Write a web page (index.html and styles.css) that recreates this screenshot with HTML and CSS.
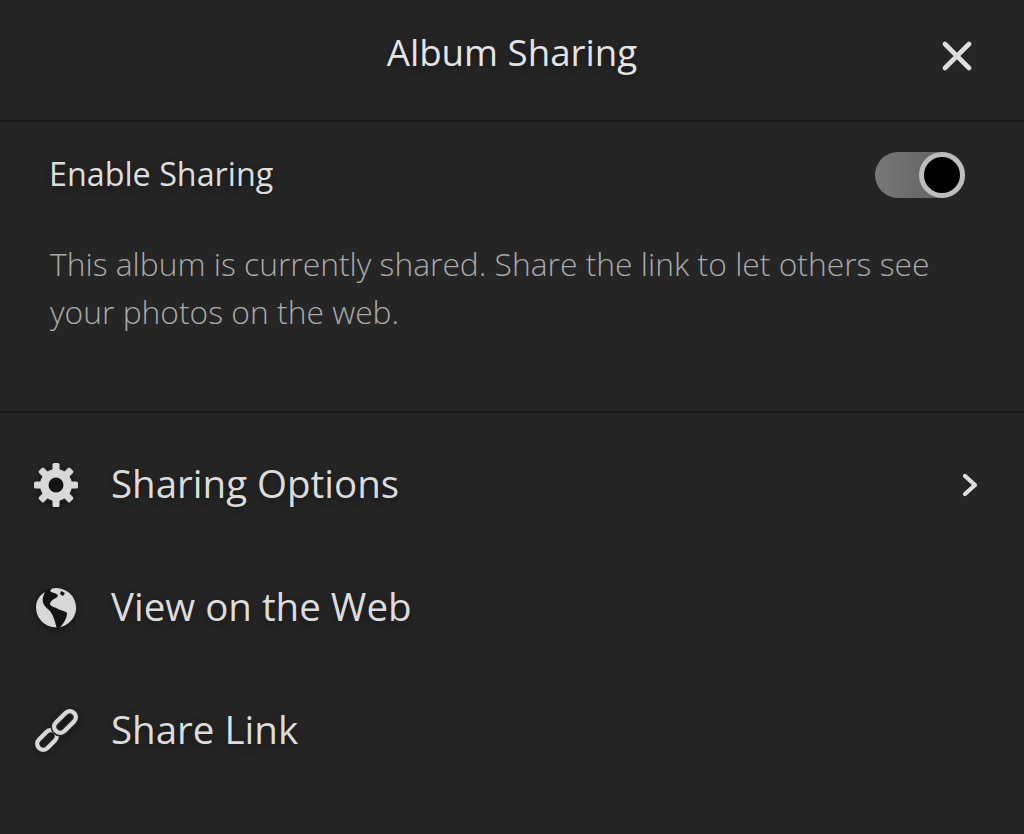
FILE: index.html
```html
<!DOCTYPE html>
<html lang="en">
<head>
    <meta charset="UTF-8">
    <meta name="viewport" content="width=device-width, initial-scale=1.0">
    <title>Album Sharing</title>
    <link rel="stylesheet" href="styles.css">
</head>
<body>
    <div class="panel">
        <header class="top-bar">
            <h1 class="title">Album Sharing</h1>
            <svg class="close-icon" viewBox="0 0 30 30">
                <path d="M3 3L27 27M27 3L3 27" fill="none" stroke="#dedede" stroke-width="4.6" stroke-linecap="round"/>
            </svg>
        </header>

        <section class="share-section">
            <div class="enable-row">
                <span class="enable-label">Enable Sharing</span>
                <div class="toggle"><div class="knob"></div></div>
            </div>
            <p class="note">This album is currently shared. Share the link to let others see your photos on the web.</p>
        </section>

        <ul class="menu">
            <li class="menu-item">
                <svg class="menu-icon" viewBox="0 0 44 44">
                    <g fill="#d8d8d8">
                        <rect x="18.5" y="0" width="7" height="44" rx="1.5"/>
                        <rect x="18.5" y="0" width="7" height="44" rx="1.5" transform="rotate(45 22 22)"/>
                        <rect x="18.5" y="0" width="7" height="44" rx="1.5" transform="rotate(90 22 22)"/>
                        <rect x="18.5" y="0" width="7" height="44" rx="1.5" transform="rotate(135 22 22)"/>
                        <circle cx="22" cy="22" r="16"/>
                    </g>
                    <circle cx="22" cy="22" r="7.5" fill="#141414"/>
                </svg>
                <span class="menu-text">Sharing Options</span>
                <svg class="chevron" viewBox="0 0 16 24">
                    <path d="M3 3L13 12L3 21" fill="none" stroke="#dedede" stroke-width="4.2" stroke-linecap="round" stroke-linejoin="round"/>
                </svg>
            </li>
            <li class="menu-item">
                <svg class="menu-icon" viewBox="0 0 44 44">
                    <circle cx="22" cy="22" r="20" fill="#141414"/>
                    <path d="M11 6C5 9.5 2 15 2 21.5C2 32 10 41 22.5 41.5C21 35 19 29 16 25C14 23 11 21 9.5 18C8 15 8.5 11 11 6Z" fill="#d8d8d8"/>
                    <path d="M18 2.4A20 20 0 0 1 42 24C41 32 35 39 26 41.3C30 37 33 32 33 27C30 24 27 25 24 23C21 21 17 21 16 18C16 16 18 14 20 13C22 12 24 11 24 9C22 7 18 7 16 5Z" fill="#d8d8d8"/>
                    <path d="M27 5L31 7L29 10L26 8Z" fill="#141414"/>
                </svg>
                <span class="menu-text">View on the Web</span>
            </li>
            <li class="menu-item">
                <svg class="menu-icon" viewBox="0 0 44 44">
                    <g fill="none" stroke-width="4.4">
                        <rect x="1.7" y="25" width="22.6" height="12" rx="6" stroke="#d8d8d8" transform="rotate(-45 13 31)"/>
                        <rect x="18.2" y="7" width="25.6" height="12" rx="6" stroke="#252525" stroke-width="7.5" transform="rotate(-45 31 13)"/>
                        <rect x="18.2" y="7" width="25.6" height="12" rx="6" stroke="#d8d8d8" transform="rotate(-45 31 13)"/>
                    </g>
                </svg>
                <span class="menu-text">Share Link</span>
            </li>
        </ul>
    </div>
</body>
</html>
```

FILE: styles.css
```css
* {
    box-sizing: border-box;
}

body {
    margin: 0;
    background-color: #252525;
    font-family: "Open Sans", "Noto Sans", sans-serif;
}

.panel {
    height: 834px;
    overflow: hidden;
}

.top-bar {
    position: relative;
    height: 122px;
    border-bottom: 2px solid #171717;
    display: flex;
    align-items: center;
    justify-content: center;
    padding-bottom: 16px;
}

.title {
    margin: 0;
    font-size: 36.7px;
    font-weight: 400;
    color: #e4e4e4;
    text-shadow: 0 2px 8px rgba(0,0,0,0.5);
}

.close-icon {
    position: absolute;
    right: 52px;
    top: 41px;
    width: 30px;
    height: 30px;
}

.share-section {
    height: 291px;
    padding: 30px 59px 0 50px;
    border-bottom: 2px solid #171717;
}

.enable-row {
    display: flex;
    align-items: center;
    justify-content: space-between;
    height: 46px;
}

.enable-label {
    margin: 0 0 4px -1px;
    font-size: 32.3px;
    color: #dedede;
    text-shadow: 0 2px 8px rgba(0,0,0,0.5);
}

.toggle {
    width: 90px;
    height: 46px;
    border-radius: 23px;
    background: linear-gradient(to right, #777, #5c5c5c);
    display: flex;
    justify-content: flex-end;
}

.knob {
    width: 46px;
    height: 46px;
    border-radius: 50%;
    background-color: #000;
    border: 5px solid #bdbdbd;
}

.note {
    margin: 42px 0 0;
    font-size: 31.8px;
    font-weight: 300;
    line-height: 48px;
    color: #aaa;
}

.menu {
    list-style: none;
    margin: 0;
    padding: 10px 46px 0 34px;
}

.menu-item {
    display: flex;
    align-items: center;
    height: 123px;
}

.menu-icon {
    width: 44px;
    height: 44px;
    flex-shrink: 0;
    filter: drop-shadow(0 2px 5px rgba(0,0,0,0.5));
}

.menu-text {
    margin: 0 0 4px 33px;
    font-size: 38.5px;
    color: #dcdcdc;
    text-shadow: 0 2px 8px rgba(0,0,0,0.5);
}

.chevron {
    margin-left: auto;
    width: 16px;
    height: 24px;
}
```
